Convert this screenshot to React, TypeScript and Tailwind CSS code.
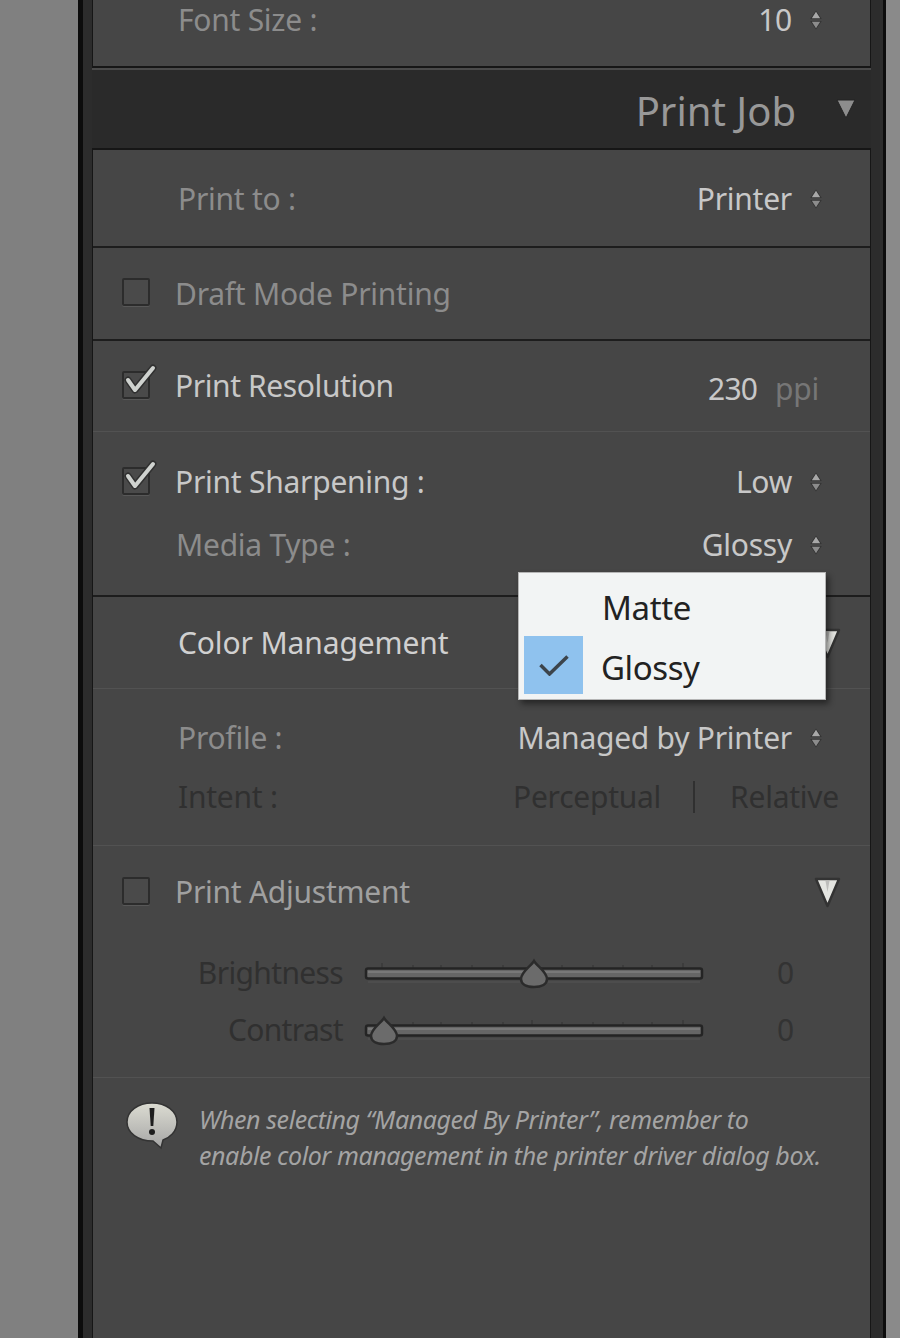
import type { ReactNode } from 'react';

const font = { fontFamily: '"Noto Sans", sans-serif' };

function Stepper() {
  return (
    <svg width="12" height="20" viewBox="0 0 12 20" className="shrink-0">
      <path d="M6 0.5 L11.8 9 H0.2 Z" fill="#333" />
      <path d="M6 1.8 L10.2 8.2 H1.8 Z" fill="#a8a8a8" />
      <path d="M6 19.5 L11.8 11 H0.2 Z" fill="#333" />
      <path d="M6 18.2 L10.2 11.8 H1.8 Z" fill="#8c8c8c" />
    </svg>
  );
}

function SelectRow({ label, value, labelClass = 'text-[#8c8c8c]', pl = 'pl-[85px]' }: { label: string; value: string; labelClass?: string; pl?: string }) {
  return (
    <div className={`flex h-10 items-center justify-between pr-[48px] ${pl}`}>
      <span className={labelClass}>{label}</span>
      <div className="flex items-center gap-[18px] text-[#c8c8c8]">
        <span>{value}</span>
        <Stepper />
      </div>
    </div>
  );
}

function Checkbox({ checked }: { checked?: boolean }) {
  return (
    <div className="relative mb-[3px] h-[28px] w-[28px] shrink-0 rounded-[2px] border-2 border-[#2c2c2c] bg-[#4a4a4a] shadow-[0_1px_0_#585858]">
      {checked && (
        <svg width="38" height="38" viewBox="0 0 38 38" className="absolute -top-[14px] -left-[2px]">
          <path d="M6 21 L13 31 L31 9" fill="none" stroke="#303030" strokeWidth="7" strokeLinecap="round" strokeLinejoin="round" />
          <path d="M6 21 L13 31 L31 9" fill="none" stroke="#cfd2cf" strokeWidth="4" strokeLinecap="round" strokeLinejoin="round" />
        </svg>
      )}
    </div>
  );
}

function CheckLabel({ label, checked, className }: { label: string; checked?: boolean; className: string }) {
  return (
    <div className="flex items-center gap-[25px]">
      <Checkbox checked={checked} />
      <span className={className}>{label}</span>
    </div>
  );
}

function Triangle() {
  return (
    <svg width="30" height="34" viewBox="0 0 30 34" className="shrink-0">
      <path d="M5 4 H28 L16.5 31 Z" fill="#e4e5e1" stroke="#333" strokeWidth="2.5" strokeLinejoin="round" />
      <path d="M14.5 6 H18.5 L16.5 17 Z" fill="#bdbdbb" />
    </svg>
  );
}

function Slider({ label, pos }: { label: string; pos: number }) {
  const ticks = [19, 50, 78, 109, 140, 169, 199, 230, 260, 289, 320];
  return (
    <div className="flex h-10 items-center">
      <span className="w-[250px] text-right tracking-[-0.65px] text-[#303030]">{label}</span>
      <svg width="342" height="40" viewBox="0 0 342 40" className="ml-[20px] shrink-0">
        {ticks.map((t) => (
          <line key={t} x1={t} x2={t} y1={t === 19 || t === 169 || t === 320 ? 10 : 12} y2="15" stroke="#333" strokeWidth="1" />
        ))}
        <rect x="3" y="15.5" width="336" height="10" rx="2" fill="#666" stroke="#242424" strokeWidth="2.5" />
        <line x1="5" x2="337" y1="19" y2="19" stroke="#787878" strokeWidth="2" />
        <line x1="5" x2="337" y1="29" y2="29" stroke="#555" strokeWidth="1" />
        <path
          d={`M${pos} 8 C${pos + 3} 13 ${pos + 13} 19 ${pos + 13} 26 C${pos + 13} 31 ${pos + 8} 34 ${pos} 34 C${pos - 8} 34 ${pos - 13} 31 ${pos - 13} 26 C${pos - 13} 19 ${pos - 3} 13 ${pos} 8 Z`}
          fill="#6b6b6b"
          stroke="#2b2b2b"
          strokeWidth="2.5"
        />
      </svg>
      <span className="ml-[72px] text-[#333]">0</span>
    </div>
  );
}

function Section({ className, children }: { className: string; children: ReactNode }) {
  return <div className={className}>{children}</div>;
}

export default function App() {
  return (
    <div style={font} className="flex h-[1338px] w-[900px] overflow-hidden text-[30px] leading-10 tracking-[-0.25px]">
      <div className="w-[78px] bg-[#808080]" />
      <div className="w-[5px] bg-[#0c0c0c]" />
      <div className="w-[9px] bg-[#2c2c2c]" />

      <div className="relative flex w-[779px] flex-col bg-[#2a2a2a]">
        {/* Font size, cut off by the top of the window */}
        <div className="h-[68px] border-x border-b-2 border-[#161616] bg-[#464646]">
          <SelectRow label="Font Size :" value="10" />
        </div>
        <div className="h-[2px] bg-[#4a4a4a]" />

        {/* Print Job header */}
        <div className="flex h-[78px] items-center justify-end gap-[40px] pt-[3px] pr-[15px]">
          <span className="text-[40px] tracking-[0px] text-[#989898]">Print Job</span>
          <svg width="20" height="20" viewBox="0 0 20 20" className="mb-[4px]">
            <path d="M1 1 H19 L10 19 Z" fill="#8d8d8d" stroke="#222" strokeWidth="1" />
          </svg>
        </div>

        <div className="flex flex-1 flex-col border-x border-t-2 border-[#161616] bg-[#464646]">
          <Section className="flex h-[98px] items-center border-b-2 border-[#1d1d1d] pt-[1px]">
            <div className="w-full">
              <SelectRow label="Print to :" value="Printer" />
            </div>
          </Section>

          <Section className="flex h-[93px] items-center border-b-2 border-[#1d1d1d] pl-[29px]">
            <CheckLabel label="Draft Mode Printing" className="text-[#8c8c8c]" />
          </Section>

          <Section className="flex h-[91px] items-center justify-between border-b border-[#525252] pr-[51px] pl-[29px]">
            <CheckLabel checked label="Print Resolution" className="tracking-[-0.4px] text-[#c8c8c8]" />
            <div className="flex items-center gap-[18px] pt-[5px]">
              <span className="tracking-[-0.8px] text-[#c8c8c8]">230</span>
              <span className="text-[#767676]">ppi</span>
            </div>
          </Section>

          <Section className="h-[165px] border-b-2 border-[#1d1d1d] pt-[30px]">
            <div className="flex h-10 items-center justify-between pr-[48px] pl-[29px]">
              <CheckLabel checked label="Print Sharpening :" className="text-[#c8c8c8]" />
              <div className="flex items-center gap-[18px] text-[#c8c8c8]">
                <span>Low</span>
                <Stepper />
              </div>
            </div>
            <div className="mt-[23px]">
              <SelectRow label="Media Type :" value="Glossy" pl="pl-[83px]" />
            </div>
          </Section>

          <Section className="flex h-[92px] items-center justify-between border-b border-[#525252] pr-[29px] pl-[85px]">
            <span className="tracking-[-0.12px] text-[#d0d0d0]">Color Management</span>
            <Triangle />
          </Section>

          <Section className="h-[157px] border-b border-[#525252] pt-[29px]">
            <SelectRow label="Profile :" value="Managed by Printer" />
            <div className="mt-[19px] flex h-10 items-center justify-between pr-[31px] pl-[85px] text-[#303030]">
              <span>Intent :</span>
              <div className="flex items-center">
                <span>Perceptual</span>
                <span className="mr-[35px] ml-[32px] h-[32px] w-[2px] bg-[#303030]" />
                <span>Relative</span>
              </div>
            </div>
          </Section>

          <Section className="h-[232px] border-b border-[#525252] pt-[26px]">
            <div className="flex h-10 items-center justify-between pr-[29px] pl-[29px]">
              <CheckLabel label="Print Adjustment" className="text-[#a0a0a0]" />
              <Triangle />
            </div>
            <div className="mt-[41px]">
              <Slider label="Brightness" pos={171} />
            </div>
            <div className="mt-[17px]">
              <Slider label="Contrast" pos={21} />
            </div>
          </Section>

          <Section className="flex flex-1 items-start gap-[20px] pt-[23px] pl-[32px]">
            <svg width="54" height="50" viewBox="0 0 54 50" className="shrink-0">
              <defs>
                <linearGradient id="bubble" x1="0" y1="0" x2="0" y2="1">
                  <stop offset="0" stopColor="#dcdcd2" />
                  <stop offset="1" stopColor="#a5a5a5" />
                </linearGradient>
              </defs>
              <path
                d="M27 2 C41 2 52 10 52 21 C52 31 44 37 38 39 L36 47 L28 40 C13 40 2 32 2 21 C2 10 13 2 27 2 Z"
                fill="url(#bubble)"
                stroke="#333"
                strokeWidth="1.5"
              />
              <path d="M24.5 7 H29.5 L28.3 25 H25.7 Z" fill="#1e1e1e" />
              <circle cx="27" cy="31" r="3" fill="#1e1e1e" />
            </svg>
            <p className="text-[25px] leading-[36px] tracking-[-0.42px] whitespace-nowrap text-[#a4a4a4] italic">
              When selecting “Managed By Printer”, remember to
              <br />
              enable color management in the printer driver dialog box.
            </p>
          </Section>
        </div>

        {/* Open Media Type menu */}
        <div className="absolute top-[572px] left-[426px] flex h-[128px] w-[308px] flex-col border border-[#b5b5b5] bg-[#f2f4f4] pt-[3px] pl-[5px] text-[33px] tracking-[-0.4px] text-[#222] shadow-[3px_4px_6px_rgba(0,0,0,0.45)]">
          <div className="flex h-[60px] items-center pt-[4px] pl-[78px]">Matte</div>
          <div className="flex h-[58px] items-center gap-[18px]">
            <div className="flex h-[58px] w-[59px] items-center justify-center bg-[#8fc2ee]">
              <svg width="30" height="21" viewBox="0 0 30 21">
                <path d="M1.5 10 L10.5 19 L28.5 1.5" fill="none" stroke="#3c444b" strokeWidth="3.5" />
              </svg>
            </div>
            <span className="pt-[5px]">Glossy</span>
          </div>
        </div>
      </div>

      <div className="w-[12px] bg-[#2c2c2c]" />
      <div className="w-[3px] bg-[#0c0c0c]" />
      <div className="w-[14px] bg-[#8a8a8a]" />
    </div>
  );
}
